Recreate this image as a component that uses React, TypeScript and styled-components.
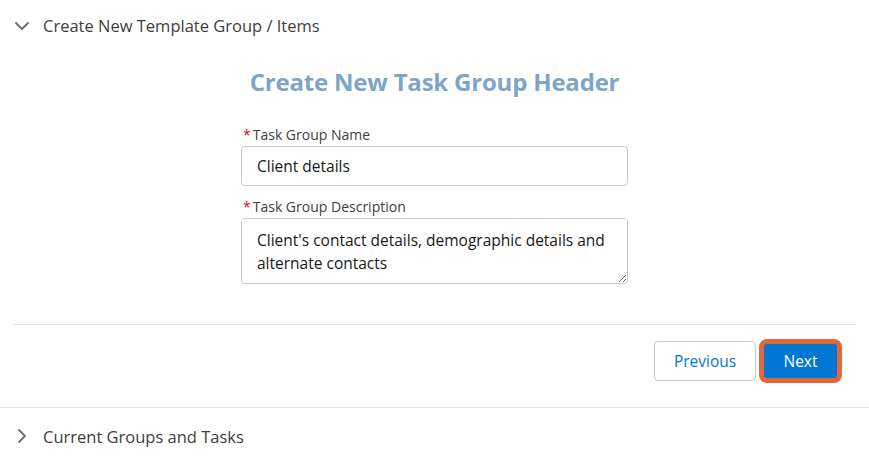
import styled, { createGlobalStyle } from "styled-components";

const GlobalStyle = createGlobalStyle`
  html, body {
    margin: 0;
    padding: 0;
    background: #ffffff;
  }
  body {
    font-family: "Open Sans", "Noto Sans", "Liberation Sans", sans-serif;
    color: #3e3e3c;
  }
  * {
    box-sizing: border-box;
  }
`;

type ChevronProps = { open?: boolean };

function Chevron({ open }: ChevronProps) {
    return (
        <ChevronIcon viewBox="0 0 16 16" $open={open}>
            <path d="M2 5 L8 11 L14 5" fill="none" stroke="#706e6b" strokeWidth="1.8" strokeLinecap="round" strokeLinejoin="round" />
        </ChevronIcon>
    );
}

export default function App() {
    return (
        <>
            <GlobalStyle />
            <Page>
                <Section>
                    <SectionHeader>
                        <Chevron open />
                        <SectionTitle>Create New Template Group / Items</SectionTitle>
                    </SectionHeader>

                    <Content>
                        <Heading>Create New Task Group Header</Heading>

                        <Form>
                            <Field>
                                <Label><Required>*</Required>Task Group Name</Label>
                                <Input defaultValue="Client details" />
                            </Field>
                            <Field>
                                <Label><Required>*</Required>Task Group Description</Label>
                                <TextArea defaultValue={"Client's contact details, demographic details and alternate contacts"} />
                            </Field>
                        </Form>
                    </Content>

                    <Divider />

                    <Actions>
                        <NeutralButton>Previous</NeutralButton>
                        <BrandButton>Next</BrandButton>
                    </Actions>
                </Section>

                <Section>
                    <SectionHeader $closed>
                        <Chevron />
                        <SectionTitle>Current Groups and Tasks</SectionTitle>
                    </SectionHeader>
                </Section>
            </Page>
        </>
    );
}

const Page = styled.div`
    width: 869px;
    display: flex;
    flex-direction: column;
`;

const Section = styled.section`
    display: flex;
    flex-direction: column;
    border-bottom: 1px solid #e5e5e5;
    &:last-child {
        border-bottom: none;
    }
`;

const SectionHeader = styled.div<{ $closed?: boolean }>`
    display: flex;
    align-items: center;
    gap: 13px;
    height: ${({ $closed }) => ($closed ? "54px" : "51px")};
    padding: ${({ $closed }) => ($closed ? "2px 0 0 14px" : "0 0 0 14px")};
`;

const ChevronIcon = styled.svg<{ $open?: boolean }>`
    width: 16px;
    height: 16px;
    flex: none;
    transform: rotate(${({ $open }) => ($open ? "0deg" : "-90deg")});
`;

const SectionTitle = styled.span`
    font-size: 16.5px;
    color: #3e3e3c;
`;

const Content = styled.div`
    display: flex;
    flex-direction: column;
    align-items: center;
    padding: 10px 0 40px;
`;

const Heading = styled.h2`
    margin: 0 0 23px;
    font-size: 24px;
    font-weight: 700;
    color: #7ea5c6;
    letter-spacing: -0.2px;
    line-height: 42px;
`;

const Form = styled.div`
    width: 387px;
    display: flex;
    flex-direction: column;
    gap: 12px;
`;

const Field = styled.div`
    display: flex;
    flex-direction: column;
    gap: 2px;
`;

const Label = styled.label`
    font-size: 14px;
    line-height: 18px;
    color: #3e3e3c;
    padding-left: 2px;
`;

const Required = styled.span`
    color: #ea001e;
    margin-right: 2px;
`;

const Input = styled.input`
    height: 40px;
    border: 1px solid #c9c9c9;
    border-radius: 4px;
    padding: 0 15px;
    font-family: inherit;
    font-size: 15.5px;
    color: #181818;
    outline: none;
`;

const TextArea = styled.textarea`
    height: 66px;
    border: 1px solid #c9c9c9;
    border-radius: 4px;
    padding: 10px 15px;
    font-family: inherit;
    font-size: 15.5px;
    line-height: 23px;
    color: #181818;
    outline: none;
    resize: vertical;
`;

const Divider = styled.hr`
    margin: 0 13px;
    border: none;
    border-top: 1px solid #e5e5e5;
`;

const Actions = styled.div`
    display: flex;
    justify-content: flex-end;
    align-items: center;
    gap: 3px;
    padding: 14px 27px 24px 0;
`;

const NeutralButton = styled.button`
    width: 102px;
    height: 40px;
    border: 1px solid #c9c9c9;
    border-radius: 4px;
    background: #ffffff;
    color: #0176d3;
    font-family: inherit;
    font-size: 15.5px;
`;

const BrandButton = styled.button`
    width: 83px;
    height: 44px;
    border: 5px solid #e4673c;
    border-radius: 8px;
    background: #0176d3;
    color: #ffffff;
    font-family: inherit;
    font-size: 15.5px;
`;
